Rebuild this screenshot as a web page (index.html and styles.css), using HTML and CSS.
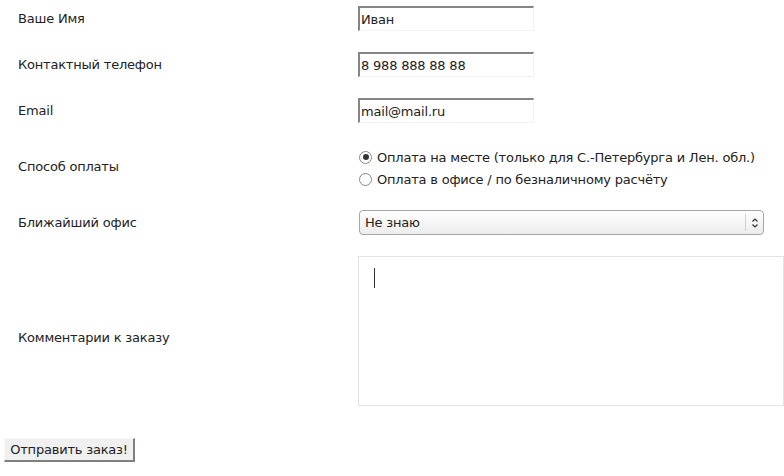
FILE: index.html
```html
<!DOCTYPE html>
<html lang="ru">
<head>
<meta charset="utf-8">
<link rel="stylesheet" href="styles.css">
</head>
<body>
<form class="order">
  <div class="grid">
    <label class="lbl">Ваше Имя</label>
    <div class="ctl"><input class="txt" type="text" value="Иван"></div>

    <label class="lbl">Контактный телефон</label>
    <div class="ctl"><input class="txt" type="text" value="8 988 888 88 88"></div>

    <label class="lbl">Email</label>
    <div class="ctl"><input class="txt" type="text" value="mail@mail.ru"></div>

    <label class="lbl">Способ оплаты</label>
    <div class="ctl radios">
      <label class="radio"><span class="dot checked"></span>Оплата на месте (только для С.-Петербурга и Лен. обл.)</label>
      <label class="radio"><span class="dot"></span>Оплата в офисе / по безналичному расчёту</label>
    </div>

    <label class="lbl">Ближайший офис</label>
    <div class="ctl">
      <div class="select">
        <span class="sel-text">Не знаю</span>
        <span class="sel-arrow">
          <svg width="8" height="12" viewBox="0 0 8 12"><path d="M1.5 4.5 L4 2 L6.5 4.5 M1.5 7.5 L4 10 L6.5 7.5" fill="none" stroke="#333" stroke-width="1.2"/></svg>
        </span>
      </div>
    </div>

    <label class="lbl lbl-comment">Комментарии к заказу</label>
    <div class="ctl area-wrap">
      <textarea class="area"></textarea>
      <span class="caret"></span>
    </div>
  </div>
  <button class="submit" type="button">Отправить заказ!</button>
</form>
</body>
</html>
```
FILE: styles.css
```css
html, body {
  margin: 0;
  padding: 0;
  background: #fff;
  overflow: hidden;
}
body {
  font-family: "DejaVu Sans", sans-serif;
  font-size: 13px;
  letter-spacing: -0.2px;
  color: #222;
}
.order {
  padding-top: 6px;
}
.grid {
  display: grid;
  grid-template-columns: 340px 1fr;
  padding-left: 18px;
  row-gap: 21px;
  align-items: center;
}
.lbl {
  line-height: 16px;
  padding-top: 1px;
}
.lbl-comment {
  margin-top: 13px;
}
.ctl {
  display: flex;
  min-width: 0;
}
.txt {
  box-sizing: border-box;
  width: 176px;
  height: 25px;
  margin: 0;
  padding: 0 1px;
  font: 13px "DejaVu Sans", sans-serif;
  letter-spacing: -0.2px;
  color: #222;
  border-style: solid;
  border-width: 2px 1px 1px 2px;
  border-color: #858585 #f2f2f2 #f2f2f2 #858585;
  background: #fff;
  outline: none;
}
.radios {
  flex-direction: column;
  margin-top: 2px;
  margin-bottom: -1px;
}
.radio {
  display: flex;
  align-items: center;
  height: 22px;
  color: #222;
}
.dot {
  box-sizing: border-box;
  width: 13px;
  height: 13px;
  border: 1px solid #8a8a8a;
  border-radius: 50%;
  margin-left: 1px;
  margin-right: 5px;
  background: #fff;
  position: relative;
}
.dot.checked::after {
  content: "";
  position: absolute;
  left: 2.5px;
  top: 2.5px;
  width: 6px;
  height: 6px;
  border-radius: 50%;
  background: #333;
}
.select {
  box-sizing: border-box;
  display: flex;
  align-items: center;
  width: 405px;
  height: 25px;
  margin-left: 1px;
  border: 1px solid #a6a6a6;
  border-radius: 4px;
  background: linear-gradient(#ffffff, #ededed);
}
.sel-text {
  flex: 1;
  padding-left: 5px;
  color: #222;
}
.sel-arrow {
  display: flex;
  align-items: center;
  justify-content: center;
  width: 17px;
  height: 17px;
  border-left: 1px solid #cfcfcf;
}
.area-wrap {
  position: relative;
}
.area {
  box-sizing: border-box;
  width: 440px;
  height: 150px;
  margin: 0;
  padding: 10px 15px;
  border: 1px solid #e3e3e3;
  resize: none;
  outline: none;
  font: 13px "DejaVu Sans", sans-serif;
  background: #fff;
}
.caret {
  position: absolute;
  left: 16px;
  top: 12px;
  width: 1px;
  height: 20px;
  background: #333;
}
.submit {
  display: block;
  box-sizing: border-box;
  margin: 32px 0 0 4px;
  width: 131px;
  height: 24px;
  padding: 0;
  font: 13px "DejaVu Sans", sans-serif;
  letter-spacing: -0.2px;
  color: #222;
  background: #f0f0f0;
  border-style: solid;
  border-width: 1px 2px 2px 1px;
  border-color: #f8f8f8 #7f7f7f #7f7f7f #f8f8f8;
}
```
